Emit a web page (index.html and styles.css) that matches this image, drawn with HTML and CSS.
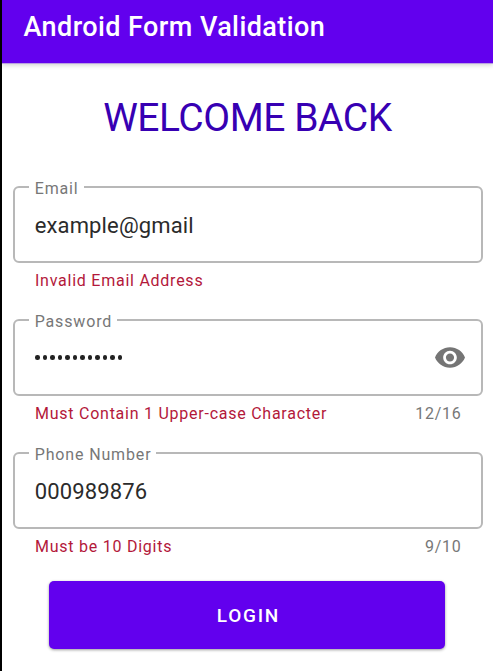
FILE: index.html
```html
<!DOCTYPE html>
<html lang="en">
<head>
<meta charset="utf-8">
<title>Android Form Validation</title>
<link rel="stylesheet" href="styles.css">
</head>
<body>
<header class="appbar"><span class="appbar-title">Android Form Validation</span></header>
<main class="content">
  <h1 class="welcome">WELCOME BACK</h1>
  <form class="form">
    <fieldset class="field">
      <legend class="label">Email</legend>
      <span class="value">example@gmail</span>
    </fieldset>
    <div class="helper"><span class="error">Invalid Email Address</span></div>
    <fieldset class="field field-password">
      <legend class="label">Password</legend>
      <span class="dots"><i></i><i></i><i></i><i></i><i></i><i></i><i></i><i></i><i></i><i></i><i></i><i></i></span>
      <svg class="eye" viewBox="1 4.5 22 15"><path d="M12 4.5C7 4.5 2.73 7.61 1 12c1.73 4.39 6 7.5 11 7.5s9.27-3.11 11-7.5c-1.73-4.39-6-7.5-11-7.5zM12 17c-2.76 0-5-2.24-5-5s2.24-5 5-5 5 2.24 5 5-2.24 5-5 5zm0-8c-1.66 0-3 1.34-3 3s1.34 3 3 3 3-1.34 3-3-1.34-3-3-3z"/></svg>
    </fieldset>
    <div class="helper"><span class="error">Must Contain 1 Upper-case Character</span><span class="counter">12/16</span></div>
    <fieldset class="field">
      <legend class="label">Phone Number</legend>
      <span class="value">000989876</span>
    </fieldset>
    <div class="helper"><span class="error">Must be 10 Digits</span><span class="counter">9/10</span></div>
    <button class="login" type="button">LOGIN</button>
  </form>
</main>
</body>
</html>
```

FILE: styles.css
```css
* { box-sizing: border-box; }
body {
  margin: 0;
  height: 671px;
  overflow: hidden;
  border-left: 2px solid #000;
  background: #fff;
  font-family: Roboto, sans-serif;
}
.appbar {
  height: 63px;
  padding: 11px 0 0 21.5px;
  background: #6200ee;
  color: #fff;
  box-shadow: 0 1px 0 #b9a0e0, 0 2px 5px rgba(0,0,0,.2);
}
.appbar-title {
  display: block;
  font-size: 27px;
  line-height: 32px;
  font-weight: 500;
  letter-spacing: .42px;
}
.content { padding: 0 10px; }
.welcome {
  height: 114px;
  margin: 0;
  padding-top: 30px;
  color: #3700b3;
  font-size: 39px;
  line-height: 50px;
  font-weight: 400;
  letter-spacing: -.45px;
  text-align: center;
}
.field {
  display: flex;
  align-items: center;
  justify-content: space-between;
  width: 470px;
  height: 86px;
  margin: 0 0 0 .7px;
  padding: 0 16px 7px 20px;
  border: 2px solid #b8b8b8;
  border-radius: 6px;
}
.field-password { padding-bottom: 9px; }
.label {
  margin-left: -6px;
  padding: 4px 5px 0 6px;
  color: #777;
  font-size: 16px;
  line-height: 16px;
  letter-spacing: .86px;
}
.value { color: #2b2b2b; font-size: 22px; line-height: 30px; letter-spacing: .14px; }
.helper {
  display: flex;
  justify-content: space-between;
  height: 47px;
  padding: 7px 21.5px 0 23px;
  font-size: 16px;
  line-height: 22px;
  letter-spacing: .75px;
}
.error { color: #b3183a; }
.counter { color: #777; }
.dots { display: flex; gap: 3px; padding-left: .6px; }
.dots i { width: 4.5px; height: 4.5px; border-radius: 50%; background: #222; }
.eye { width: 30px; height: 21px; fill: #757575; }
.login {
  display: block;
  width: 396px;
  height: 68px;
  margin: 5px 0 0 37.4px;
  padding: 1px 0 0 2px;
  border: 0;
  border-radius: 5px;
  background: #6200ee;
  box-shadow: 0 1px 3px rgba(0,0,0,.4);
  color: #fff;
  font: 500 19px Roboto, sans-serif;
  letter-spacing: 1.7px;
}
```
